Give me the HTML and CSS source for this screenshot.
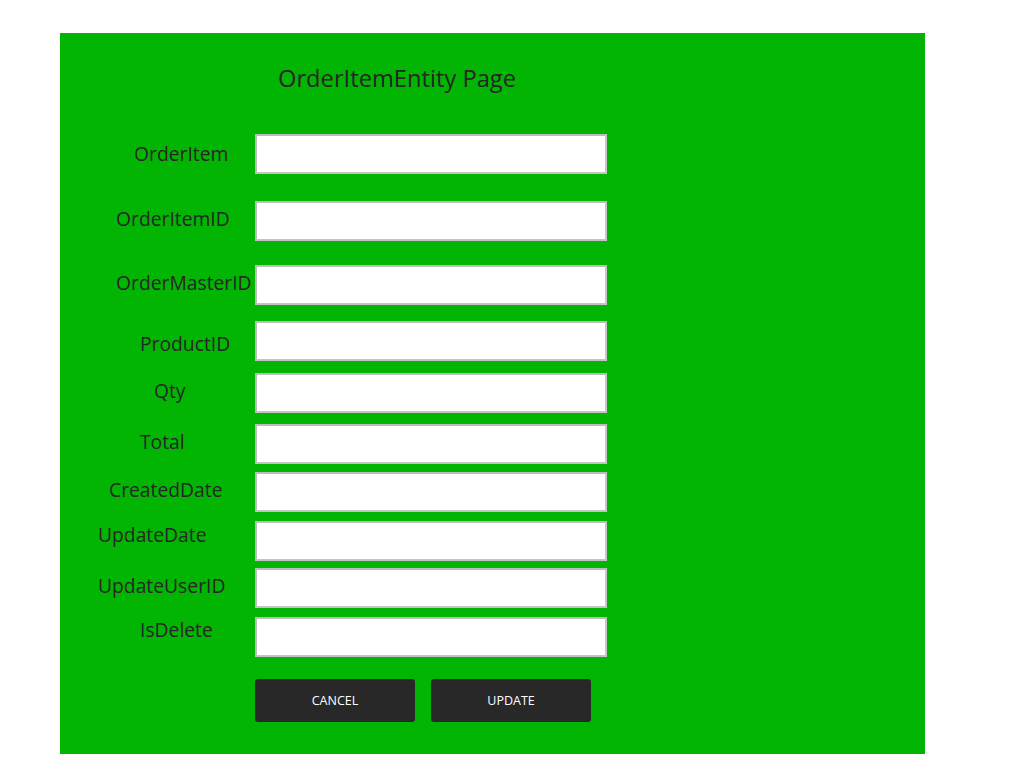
FILE: index.html
```html
<!DOCTYPE html>
<html>
<head>
<meta charset="utf-8">
<title>OrderItemEntity Page</title>
<link rel="stylesheet" href="styles.css">
</head>
<body>
<div class="panel">
  <h1 class="title">OrderItemEntity Page</h1>
  <form class="form">
    <div class="row r1"><label class="label l1">OrderItem</label><input class="field" type="text"></div>
    <div class="row r2"><label class="label l2">OrderItemID</label><input class="field" type="text"></div>
    <div class="row r3"><label class="label l3">OrderMasterID</label><input class="field" type="text"></div>
    <div class="row r4"><label class="label l4">ProductID</label><input class="field" type="text"></div>
    <div class="row r5"><label class="label l5">Qty</label><input class="field" type="text"></div>
    <div class="row r6"><label class="label l6">Total</label><input class="field" type="text"></div>
    <div class="row r7"><label class="label l7">CreatedDate</label><input class="field" type="text"></div>
    <div class="row r8"><label class="label l8">UpdateDate</label><input class="field" type="text"></div>
    <div class="row r9"><label class="label l9">UpdateUserID</label><input class="field" type="text"></div>
    <div class="row r10"><label class="label l10">IsDelete</label><input class="field" type="text"></div>
    <div class="actions">
      <button type="button" class="btn">CANCEL</button>
      <button type="button" class="btn">UPDATE</button>
    </div>
  </form>
</div>
</body>
</html>
```
FILE: styles.css
```css
html, body {
  margin: 0;
  padding: 0;
  background: #ffffff;
}
body {
  font-family: "Open Sans", "DejaVu Sans", sans-serif;
  color: #2b2b2b;
}
.panel {
  margin: 33px 0 0 60px;
  width: 865px;
  height: 721px;
  background: #02b502;
  box-sizing: border-box;
  padding-top: 29px;
}
.title {
  margin: 0 0 0 218px;
  font-size: 23.7px;
  font-weight: 400;
  line-height: 32px;
  color: #262626;
}
.form {
  margin: 0;
  padding-top: 40px;
  display: flex;
  flex-direction: column;
}
.row {
  display: flex;
  align-items: center;
  height: 40px;
}
.label {
  width: 195px;
  box-sizing: border-box;
  font-size: 19.3px;
  line-height: 24px;
  color: #262626;
  white-space: nowrap;
}
.field {
  width: 352px;
  height: 40px;
  box-sizing: border-box;
  margin: 0;
  border: 2px solid #bcbcbc;
  border-right-color: #c8c8c8;
  border-bottom-color: #c4c4c4;
  background: #ffffff;
  outline: none;
  padding: 0 8px;
  font-family: inherit;
  font-size: 16px;
}
.r1 { margin-top: 0; }
.r2 { margin-top: 27px; }
.r3 { margin-top: 24px; }
.r4 { margin-top: 16px; }
.r5 { margin-top: 12px; }
.r6 { margin-top: 11px; }
.r7 { margin-top: 8px; }
.r8 { margin-top: 9px; }
.r9 { margin-top: 7px; }
.r10 { margin-top: 9px; }
.l1 { padding-left: 74px; }
.l2 { padding-left: 56px; position: relative; top: -2px; }
.l3 { padding-left: 56px; position: relative; top: -2px; }
.l4 { padding-left: 80px; position: relative; top: 3px; }
.l5 { padding-left: 94px; position: relative; top: -2px; }
.l6 { padding-left: 80px; position: relative; top: -2px; }
.l7 { padding-left: 49px; position: relative; top: -2px; }
.l8 { padding-left: 38px; position: relative; top: -6px; }
.l9 { padding-left: 38px; position: relative; top: -2px; }
.l10 { padding-left: 80px; position: relative; top: -7px; }
.actions {
  display: flex;
  gap: 16px;
  margin-top: 22px;
  padding-left: 195px;
}
.btn {
  width: 160px;
  height: 43px;
  border: none;
  border-radius: 3px;
  background: #282828;
  color: #ffffff;
  font-family: "Open Sans", "DejaVu Sans", sans-serif;
  font-size: 12.5px;
  padding: 0;
  cursor: pointer;
}
```
